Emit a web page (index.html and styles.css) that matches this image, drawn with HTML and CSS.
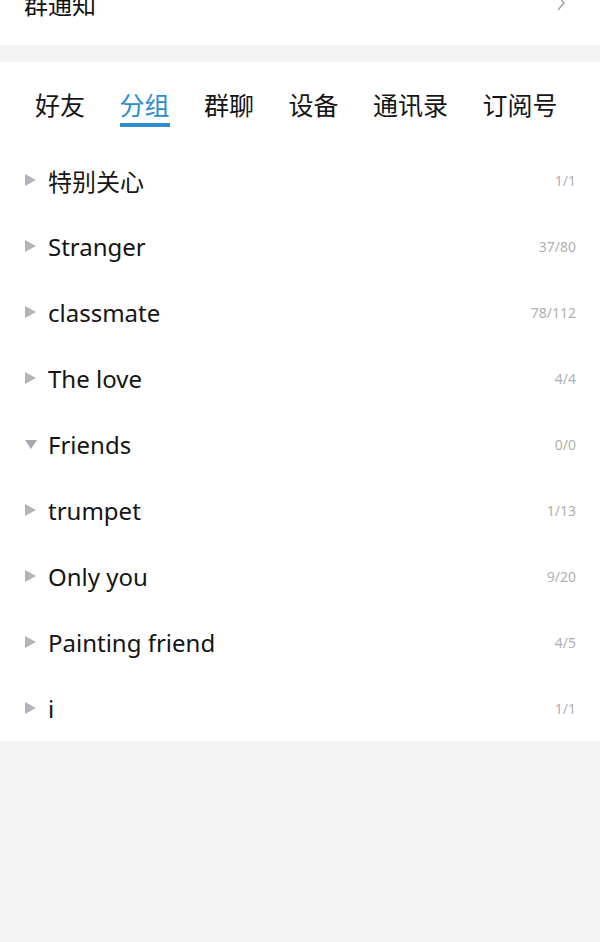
FILE: index.html
```html
<!DOCTYPE html>
<html lang="zh-CN">
<head>
    <meta charset="UTF-8">
    <meta name="viewport" content="width=device-width, initial-scale=1.0">
    <title>联系人</title>
    <link rel="stylesheet" href="styles.css">
</head>
<body>
    <div class="card notice-card">
        <div class="notice">
            <span>群通知</span>
            <svg class="chevron" width="12" height="18" viewBox="0 0 12 18"><path d="M3 2 L9 9 L3 16" fill="none" stroke="#a8a8a8" stroke-width="1.6"/></svg>
        </div>
    </div>

    <div class="card contacts">
        <div class="tabs">
            <div class="tab">好友</div>
            <div class="tab active">分组</div>
            <div class="tab">群聊</div>
            <div class="tab">设备</div>
            <div class="tab">通讯录</div>
            <div class="tab">订阅号</div>
        </div>

        <div class="group"><span class="arrow"></span><span class="name">特别关心</span><span class="count">1/1</span></div>
        <div class="group"><span class="arrow"></span><span class="name">Stranger</span><span class="count">37/80</span></div>
        <div class="group"><span class="arrow"></span><span class="name">classmate</span><span class="count">78/112</span></div>
        <div class="group"><span class="arrow"></span><span class="name">The love</span><span class="count">4/4</span></div>
        <div class="group open"><span class="arrow"></span><span class="name">Friends</span><span class="count">0/0</span></div>
        <div class="group"><span class="arrow"></span><span class="name">trumpet</span><span class="count">1/13</span></div>
        <div class="group"><span class="arrow"></span><span class="name">Only you</span><span class="count">9/20</span></div>
        <div class="group"><span class="arrow"></span><span class="name">Painting friend</span><span class="count">4/5</span></div>
        <div class="group"><span class="arrow"></span><span class="name">i</span><span class="count">1/1</span></div>
    </div>
</body>
</html>
```

FILE: styles.css
```css
body {
    margin: 0;
    background: #f4f4f4;
    font-family: "Noto Sans", "Noto Sans CJK SC", sans-serif;
    color: #111;
    overflow: hidden;
}
.card {
    background: #ffffff;
}
.notice-card {
    margin-top: -30px;
    padding-bottom: 9px;
    margin-bottom: 17px;
}
.notice {
    height: 66px;
    display: flex;
    align-items: center;
    justify-content: space-between;
    padding: 0 33px 0 24px;
    font-size: 24px;
}
.tabs {
    display: flex;
    gap: 34.5px;
    padding: 28px 0 20px 35px;
}
.tab {
    font-size: 25px;
    line-height: 30px;
    color: #151515;
    padding-bottom: 7px;
}
.tab.active {
    color: #2b8dcb;
    padding-bottom: 3px;
    border-bottom: 4px solid #2b8dcb;
}
.group {
    height: 66px;
    display: flex;
    align-items: center;
    padding: 0 24px 0 25px;
}
.arrow {
    width: 0;
    height: 0;
    border-top: 6px solid transparent;
    border-bottom: 6px solid transparent;
    border-left: 11px solid #b2b2b8;
    margin-right: 12px;
}
.group.open .arrow {
    border-left: 6px solid transparent;
    border-right: 6px solid transparent;
    border-top: 9px solid #a8a8b0;
    border-bottom: 0;
    margin-right: 11px;
}
.name {
    flex: 1;
    font-size: 24px;
    color: #151515;
}
.count {
    font-size: 14px;
    color: #b0b0b0;
}
```
